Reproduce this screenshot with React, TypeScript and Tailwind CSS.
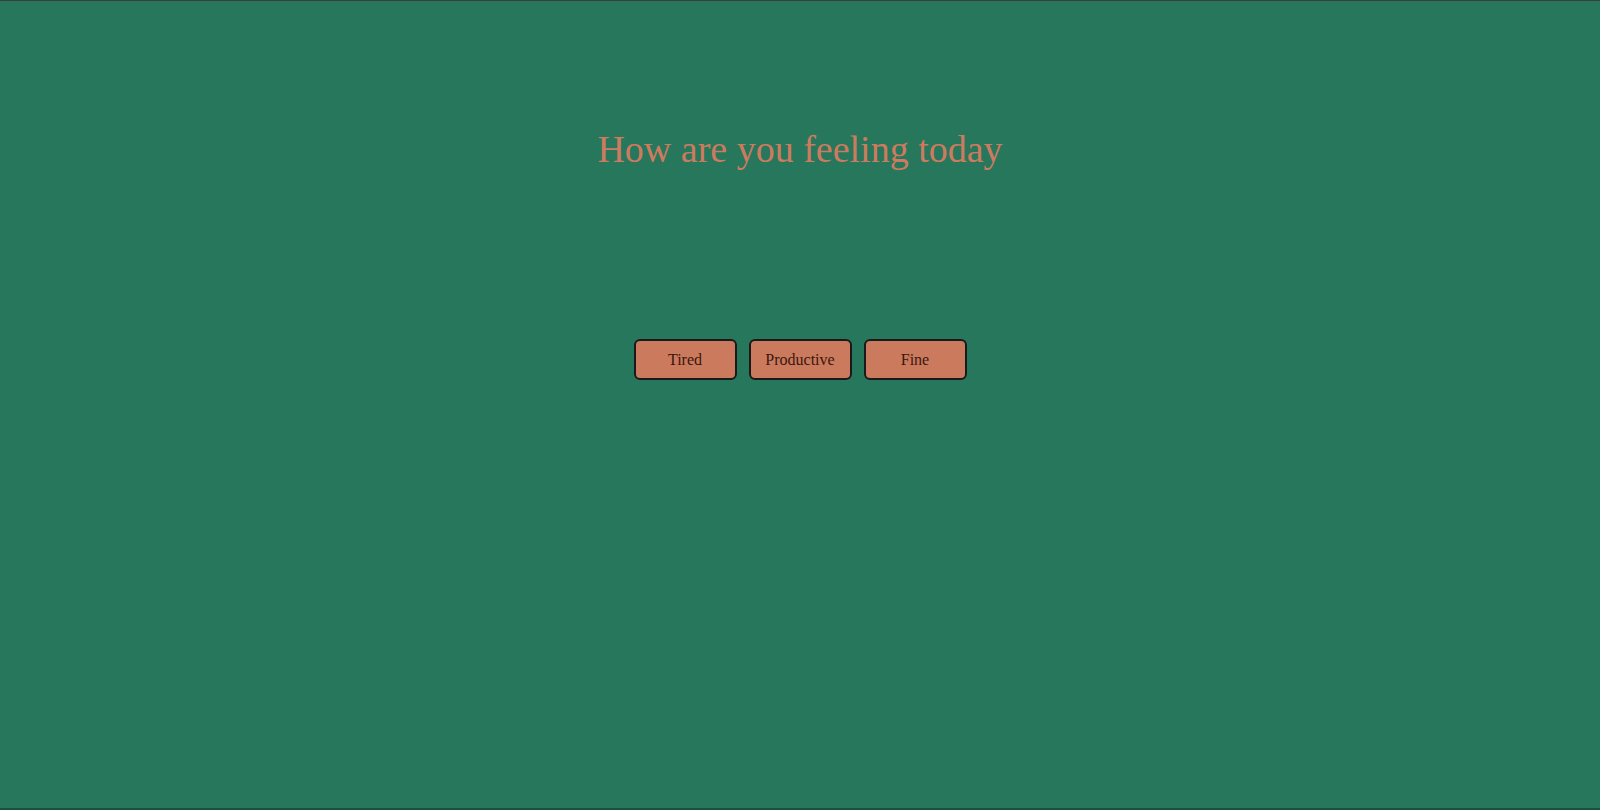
import React from "react";

export default function App() {
  const moods = ["Tired", "Productive", "Fine"];
  return (
    <div
      className="h-[810px] w-full bg-[#26775c] border-t border-t-[#3a3d3c] border-b-2 border-b-[#1c4f3d] flex flex-col items-center"
      style={{ fontFamily: '"Liberation Serif", "DejaVu Serif", serif' }}
    >
      <h1 className="mt-[125px] h-[46px] leading-[46px] text-[38px] text-[#cd7b5f] font-normal">
        How are you feeling today
      </h1>
      <div className="mt-[167px] flex gap-[12px]">
        {moods.map((m) => (
          <button
            key={m}
            className="w-[103px] h-[41px] rounded-[6px] border-2 border-[#1a1a1a] bg-[#cc7a5e] text-[#3a170d] text-[16px]"
          >
            {m}
          </button>
        ))}
      </div>
    </div>
  );
}
